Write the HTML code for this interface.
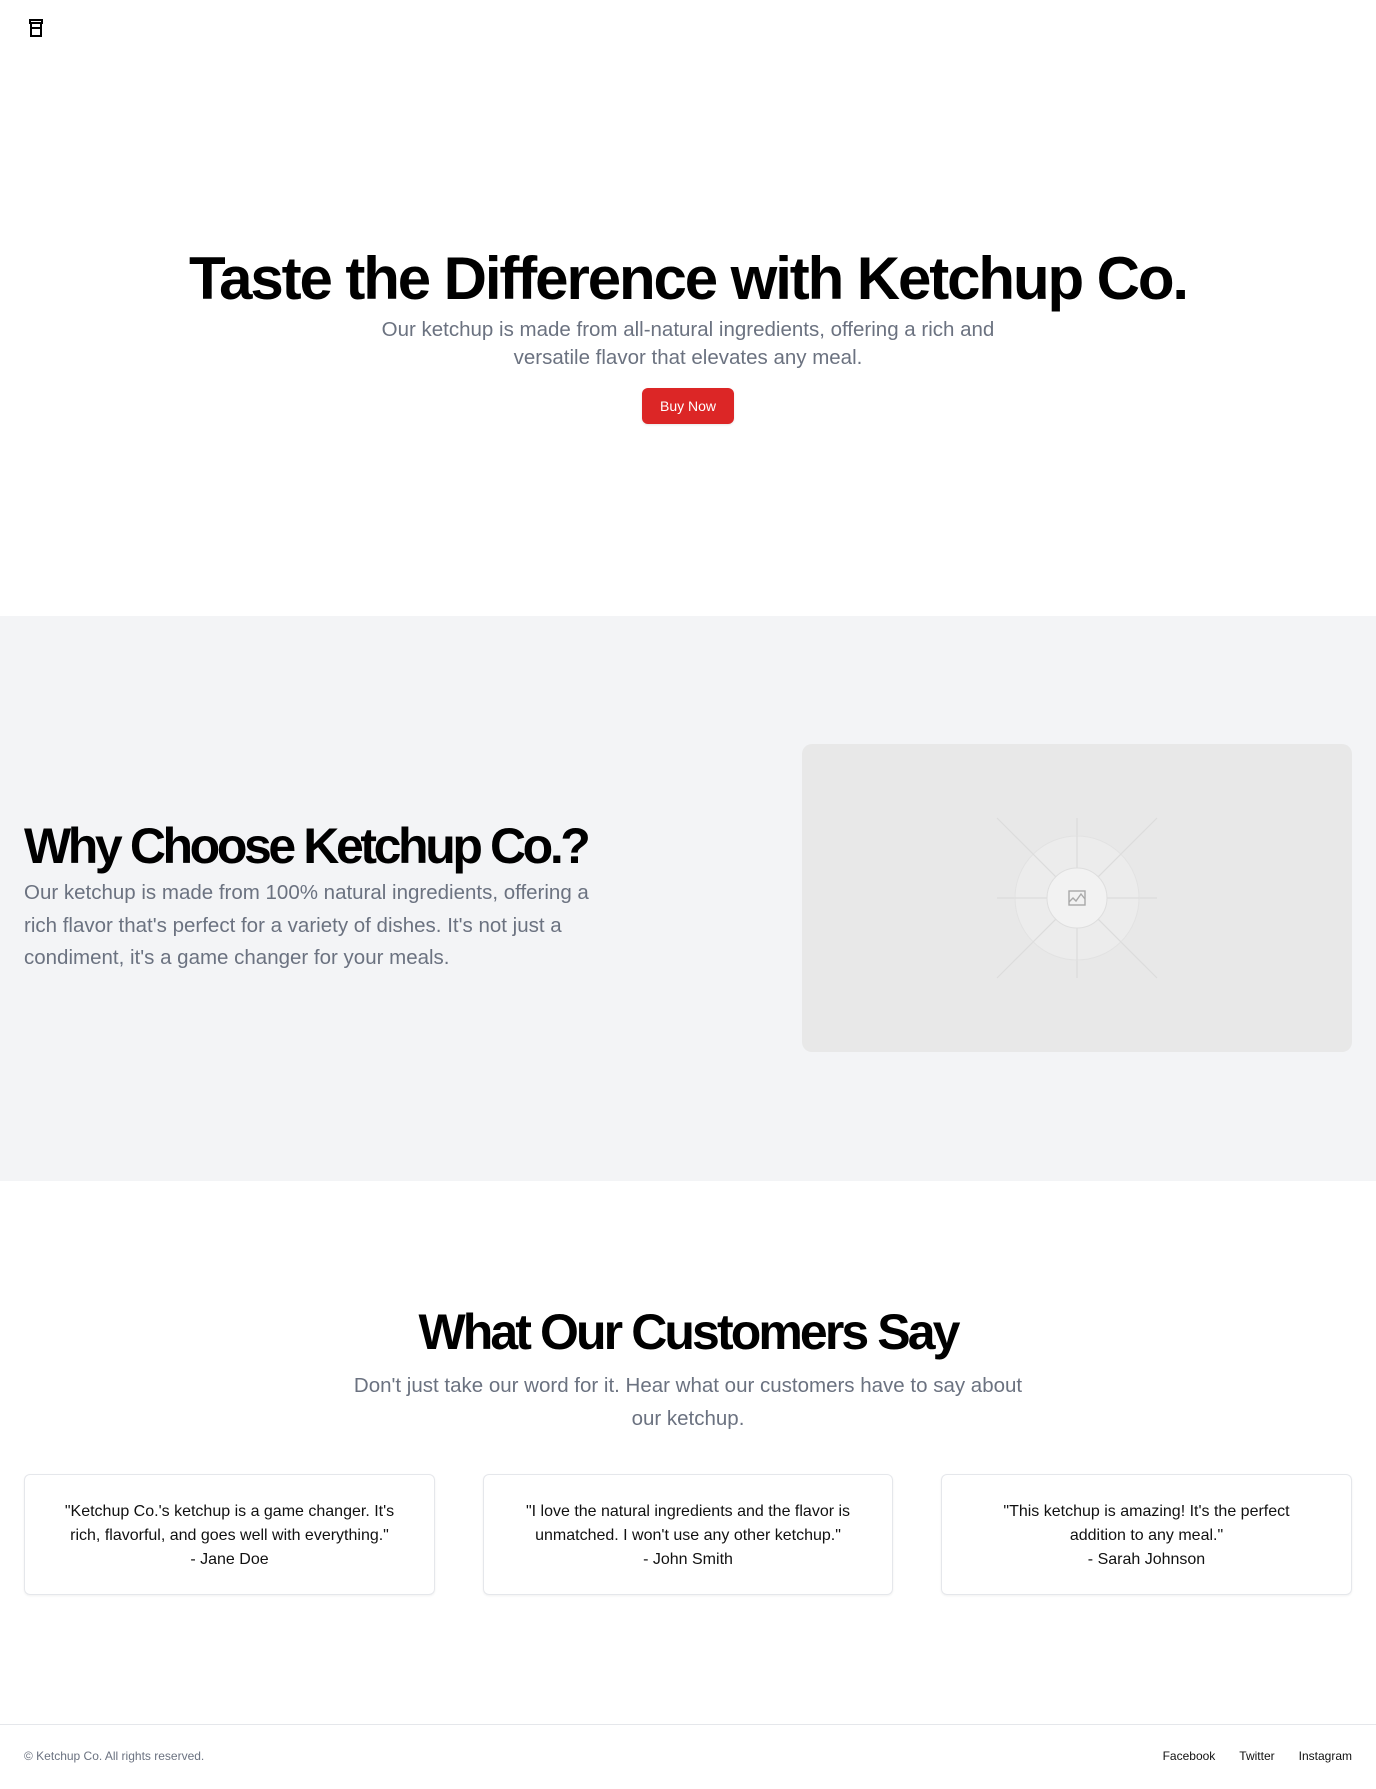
<!DOCTYPE html>
<html><head><meta charset="utf-8"><style>
*{margin:0;padding:0;box-sizing:border-box}
body{width:1376px;height:1789px;font-family:"Liberation Sans",sans-serif;background:#fff;color:#000;position:relative;overflow:hidden}
.abs{position:absolute}
h1,h2{font-weight:700;color:#000;white-space:nowrap}
.c{left:0;width:1376px;text-align:center}
.gray{color:#6b7280}
</style></head><body>
<svg class="abs" style="left:27px;top:18px" width="18" height="20" viewBox="0 0 18 20" fill="none" stroke="#000" stroke-width="2"><path d="M3 2h12v3H3zM4 5v13h10V5M4 10h10"/></svg>

<h1 class="abs c" style="top:243px;font-size:60px;letter-spacing:-2.1px;line-height:72px">Taste the Difference with Ketchup Co.</h1>
<p class="abs c gray" style="top:316px;font-size:20.5px;line-height:28px">Our ketchup is made from all-natural ingredients, offering a rich and<br>versatile flavor that elevates any meal.</p>
<div class="abs" style="left:642px;top:388px;width:92px;height:36px;background:#dc2626;border-radius:6px;color:#fff;font-size:14px;line-height:36px;text-align:center;box-shadow:0 1px 2px rgba(0,0,0,.1)">Buy Now</div>

<div class="abs" style="left:0;top:616px;width:1376px;height:565px;background:#f3f4f6"></div>
<h2 class="abs" style="left:24px;top:816px;font-size:50px;letter-spacing:-3.4px;line-height:60px">Why Choose Ketchup Co.?</h2>
<p class="abs gray" style="left:24px;top:877px;font-size:20.5px;line-height:32.5px;width:640px">Our ketchup is made from 100% natural ingredients, offering a<br>rich flavor that's perfect for a variety of dishes. It's not just a<br>condiment, it's a game changer for your meals.</p>
<div class="abs" style="left:802px;top:744px;width:550px;height:308px;background:#e8e8e8;border-radius:10px;overflow:hidden">
<svg width="550" height="308" viewBox="0 0 550 308">
<g stroke="#dcdcdc" stroke-width="1.2" fill="none">
<line x1="195" y1="154" x2="355" y2="154"/><line x1="275" y1="74" x2="275" y2="234"/>
<line x1="195" y1="74" x2="355" y2="234"/><line x1="355" y1="74" x2="195" y2="234"/>
</g>
<circle cx="275" cy="154" r="62" fill="#efefef" fill-opacity=".6" stroke="#e2e2e2"/>
<g stroke="#dcdcdc" stroke-width="1.2"><line x1="213" y1="154" x2="337" y2="154"/><line x1="275" y1="92" x2="275" y2="216"/><line x1="231" y1="110" x2="319" y2="198"/><line x1="319" y1="110" x2="231" y2="198"/></g>
<circle cx="275" cy="154" r="30" fill="#f2f2f2" stroke="#dedede"/>
<g stroke="#a8a8a8" stroke-width="1.4" fill="none"><rect x="267" y="147" width="16" height="14"/><path d="M267 158l4-4 3 3 5-7 4 5"/></g>
</svg></div>

<h2 class="abs c" style="top:1302px;font-size:50px;letter-spacing:-2.9px;line-height:60px">What Our Customers Say</h2>
<p class="abs c gray" style="top:1369px;font-size:20.5px;line-height:33px">Don't just take our word for it. Hear what our customers have to say about<br>our ketchup.</p>

<div class="abs" style="left:24px;top:1474px;width:411px;height:121px;border:1px solid #e5e7eb;border-radius:6px;box-shadow:0 1px 2px rgba(0,0,0,.06);text-align:center;font-size:16px;line-height:24px;padding-top:25px;color:#111">"Ketchup Co.'s ketchup is a game changer. It's<br>rich, flavorful, and goes well with everything."<br>- Jane Doe</div>
<div class="abs" style="left:483px;top:1474px;width:410px;height:121px;border:1px solid #e5e7eb;border-radius:6px;box-shadow:0 1px 2px rgba(0,0,0,.06);text-align:center;font-size:16px;line-height:24px;padding-top:25px;color:#111">"I love the natural ingredients and the flavor is<br>unmatched. I won't use any other ketchup."<br>- John Smith</div>
<div class="abs" style="left:941px;top:1474px;width:411px;height:121px;border:1px solid #e5e7eb;border-radius:6px;box-shadow:0 1px 2px rgba(0,0,0,.06);text-align:center;font-size:16px;line-height:24px;padding-top:25px;color:#111">"This ketchup is amazing! It's the perfect<br>addition to any meal."<br>- Sarah Johnson</div>

<div class="abs" style="left:0;top:1724px;width:1376px;border-top:1px solid #e5e7eb"></div>
<div class="abs gray" style="left:24px;top:1748px;font-size:12px;line-height:16px">© Ketchup Co. All rights reserved.</div>
<div class="abs" style="right:24px;top:1748px;font-size:12px;line-height:16px;color:#111;white-space:nowrap"><span>Facebook</span><span style="margin-left:24px">Twitter</span><span style="margin-left:24px">Instagram</span></div>
</body></html>
